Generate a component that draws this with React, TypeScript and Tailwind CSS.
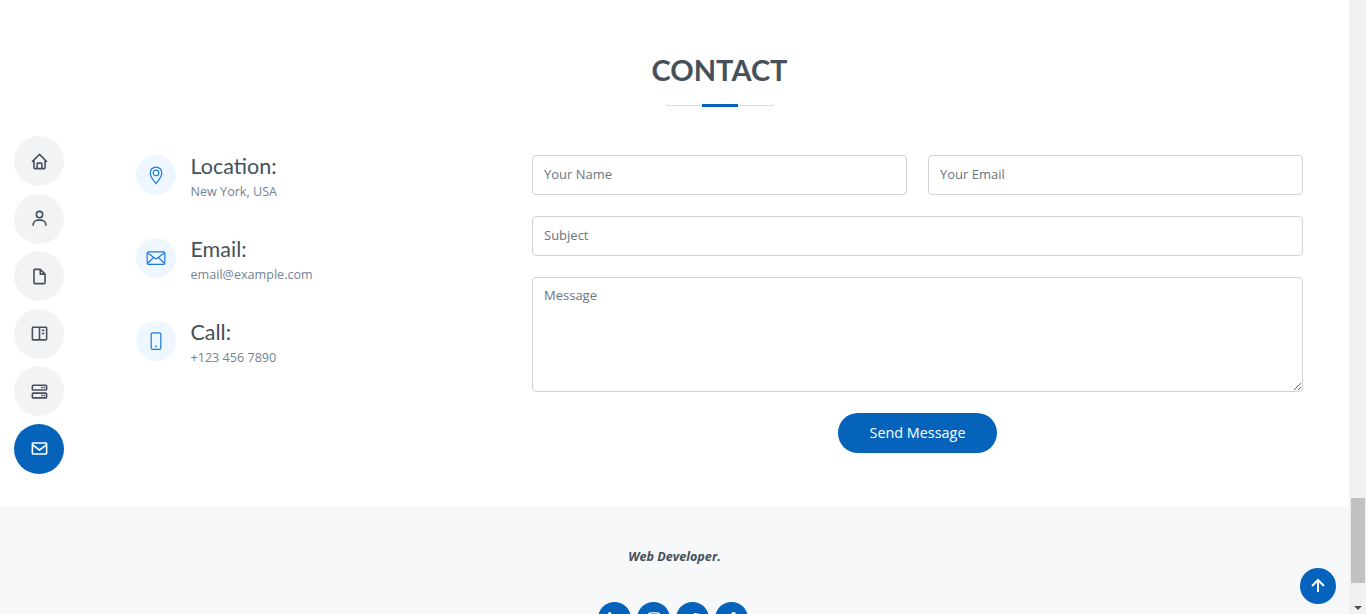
import { BiHome, BiUser, BiFileBlank, BiBookContent, BiServer, BiEnvelope, BiUpArrowAlt, BiLogoLinkedin, BiLogoInstagram, BiLogoTwitter, BiLogoFacebook } from "react-icons/bi";

const navItems = [
  { icon: BiHome },
  { icon: BiUser },
  { icon: BiFileBlank },
  { icon: BiBookContent },
  { icon: BiServer },
  { icon: BiEnvelope, active: true },
];

const PinIcon = () => (
  <svg width="20" height="20" viewBox="0 0 20 20" fill="none" stroke="#1b7bd9" strokeWidth="1.2">
    <path d="M10 18.5 C7.5 15.5 4.2 11.6 4.2 7.9 A5.8 5.8 0 0 1 15.8 7.9 C15.8 11.6 12.5 15.5 10 18.5 Z" />
    <circle cx="10" cy="7.9" r="2.8" />
  </svg>
);

const MailIcon = () => (
  <svg width="20" height="20" viewBox="0 0 20 20" fill="none" stroke="#1b7bd9" strokeWidth="1.2">
    <rect x="1.2" y="3.8" width="17.6" height="12.6" rx="1.2" />
    <path d="M1.5 5 L10 11 L18.5 5 M1.5 15.5 L7.5 9.5 M18.5 15.5 L12.5 9.5" />
  </svg>
);

const PhoneIcon = () => (
  <svg width="20" height="20" viewBox="0 0 20 20" fill="none" stroke="#1b7bd9" strokeWidth="1.2">
    <rect x="5.2" y="1.8" width="9.6" height="16.6" rx="1.4" />
    <circle cx="10" cy="15.4" r="0.9" fill="#1b7bd9" stroke="none" />
  </svg>
);

const infoItems = [
  { icon: PinIcon, title: "Location:", text: "New York, USA" },
  { icon: MailIcon, title: "Email:", text: "email@example.com" },
  { icon: PhoneIcon, title: "Call:", text: "+123 456 7890" },
];

const socials = [BiLogoLinkedin, BiLogoInstagram, BiLogoTwitter, BiLogoFacebook];

const fieldClass =
  "w-full border border-[#ced4da] rounded-[4px] px-[11px] text-[13px] text-[#45505b] placeholder:text-[#6c757d] outline-none bg-white";

export default function App() {
  return (
    <div className="relative flex h-[614px] overflow-hidden bg-white font-['Open_Sans',sans-serif] text-[#45505b]">
      <div className="flex-1 flex flex-col min-w-0">
        {/* Contact */}
        <section className="h-[507px] shrink-0 pl-[136px] pr-[46px] pt-[51px]">
          <div className="flex flex-col items-center">
            <h2 className="font-['Lato',sans-serif] text-[29px] leading-[38px] font-bold text-[#45505b]">CONTACT</h2>
            <div className="relative mt-[16px] w-[108px] h-px bg-[#dddddd]">
              <div className="absolute left-[36px] top-[-1px] w-[36px] h-[3px] bg-[#0563bb]" />
            </div>
          </div>

          <div className="flex mt-[49px]">
            <div className="w-[396px] shrink-0 flex flex-col gap-[43px]">
              {infoItems.map((item) => (
                <div key={item.title} className="flex h-[40px]">
                  <div className="w-[40px] h-[40px] rounded-full bg-[#eef7ff] flex items-center justify-center shrink-0">
                    <item.icon />
                  </div>
                  <div className="ml-[14.5px] -mt-[2px]">
                    <h4 className="font-['Lato',sans-serif] text-[21.5px] leading-[26px] font-normal text-[#45505b]">{item.title}</h4>
                    <p className="mt-[3px] text-[12.6px] leading-[20px] text-[#728394]">{item.text}</p>
                  </div>
                </div>
              ))}
            </div>

            <form className="flex-1 flex flex-col gap-[21px]">
              <div className="flex gap-[21px]">
                <input className={`${fieldClass} h-[40px] pb-[2px]`} placeholder="Your Name" />
                <input className={`${fieldClass} h-[40px] pb-[2px]`} placeholder="Your Email" />
              </div>
              <input className={`${fieldClass} h-[40px] pb-[2px]`} placeholder="Subject" />
              <textarea className={`${fieldClass} h-[115px] py-[8px] block`} placeholder="Message" />
              <div className="flex justify-center">
                <button type="button" className="w-[159px] h-[40px] rounded-full bg-[#0563bb] text-white text-[14.4px]">
                  Send Message
                </button>
              </div>
            </form>
          </div>
        </section>

        {/* Footer */}
        <footer className="flex-1 bg-[#f7f8f9] flex flex-col items-center pt-[41px]">
          <p className="text-[12.6px] leading-[18px] font-bold italic text-[#45505b]">Web Developer.</p>
          <div className="flex gap-[6px] mt-[36px] -ml-[3px]">
            {socials.map((Icon, i) => (
              <div key={i} className="w-[33px] h-[33px] rounded-full bg-[#0563bb] flex items-center justify-center text-white">
                <Icon size={18} />
              </div>
            ))}
          </div>
        </footer>
      </div>

      {/* Scrollbar */}
      <div className="w-[17px] shrink-0 bg-[#f1f1f1] flex flex-col justify-end items-center">
        <div className="w-[14px] h-[85px] bg-[#c1c1c1] mb-[23px]" />
        <div className="w-0 h-0 mb-[4px] border-x-[4px] border-x-transparent border-t-[4px] border-t-[#505050]" />
      </div>

      {/* Side nav */}
      <nav className="absolute left-[14px] top-[136px] flex flex-col gap-[7.6px]">
        {navItems.map((item, i) => (
          <div
            key={i}
            className={
              item.active
                ? "w-[50px] h-[50px] rounded-full bg-[#0563bb] text-white flex items-center justify-center"
                : "w-[50px] h-[50px] rounded-full bg-[#f2f3f5] text-[#45505b] flex items-center justify-center"
            }
          >
            <item.icon size={19} />
          </div>
        ))}
      </nav>

      {/* Back to top */}
      <div className="absolute left-[1300px] top-[568px] w-[36px] h-[36px] rounded-full bg-[#0563bb] text-white flex items-center justify-center">
        <BiUpArrowAlt size={24} />
      </div>
    </div>
  );
}
